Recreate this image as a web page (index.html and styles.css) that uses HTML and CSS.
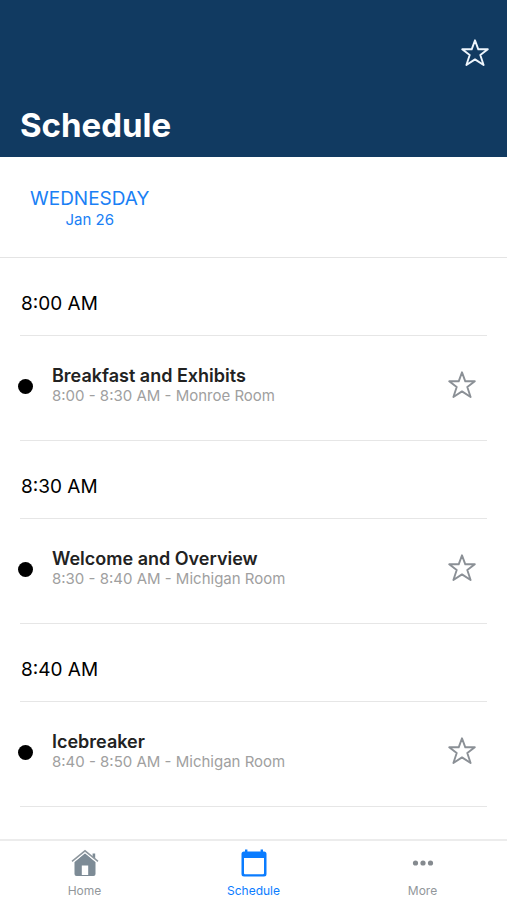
FILE: index.html
```html
<!DOCTYPE html>
<html lang="en">
<head>
<meta charset="utf-8">
<meta name="viewport" content="width=device-width, initial-scale=1">
<title>Schedule</title>
<link rel="stylesheet" href="styles.css">
</head>
<body>
<svg class="defs" aria-hidden="true">
  <symbol id="star" viewBox="0 0 28 28">
    <path d="M14 1.300 17.300 10.300H26.800L19.300 16 22.600 26 14 20.400 5.400 26 8.700 16 1.200 10.300H10.700Z" fill="none" stroke="currentColor" stroke-width="1.900" stroke-linejoin="round"/>
  </symbol>
</svg>

<header class="header">
  <button class="star star-light" type="button" aria-label="Favorites"><svg><use href="#star"/></svg></button>
  <h1>Schedule</h1>
</header>

<div class="days">
  <button class="day" type="button"><span class="day-name">WEDNESDAY</span><span class="day-date">Jan 26</span></button>
</div>

<main class="list">
  <section>
    <h2>8:00 AM</h2>
    <article class="item">
      <span class="dot"></span>
      <div class="text"><h3>Breakfast and Exhibits</h3><p>8:00 - 8:30 AM - Monroe Room</p></div>
      <button class="star" type="button" aria-label="Add Breakfast and Exhibits to favorites"><svg><use href="#star"/></svg></button>
    </article>
  </section>
  <section>
    <h2>8:30 AM</h2>
    <article class="item">
      <span class="dot"></span>
      <div class="text"><h3>Welcome and Overview</h3><p>8:30 - 8:40 AM - Michigan Room</p></div>
      <button class="star" type="button" aria-label="Add Welcome and Overview to favorites"><svg><use href="#star"/></svg></button>
    </article>
  </section>
  <section>
    <h2>8:40 AM</h2>
    <article class="item">
      <span class="dot"></span>
      <div class="text"><h3>Icebreaker</h3><p>8:40 - 8:50 AM - Michigan Room</p></div>
      <button class="star" type="button" aria-label="Add Icebreaker to favorites"><svg><use href="#star"/></svg></button>
    </article>
  </section>
</main>

<nav class="tabs">
  <a href="#home">
    <svg viewBox="0 0 28 28">
      <path fill-rule="evenodd" d="M3.500 13 14 4.300 24.500 13V25Q24.500 27 22.500 27H5.500Q3.500 27 3.500 25ZM10.800 16.500V26H17.200V16.500Z" fill="#7d8b96"/>
      <path d="M1 12.800 14 2 27 12.800" fill="none" stroke="#fff" stroke-width="3"/>
      <path d="M21.600 4.500H24.200V10L21.600 7.900Z" fill="#7d8b96"/>
      <path d="M1 12.400 14 1.800 27 12.400" fill="none" stroke="#8e979e" stroke-width="1.500"/>
    </svg>
    <span>Home</span>
  </a>
  <a href="#schedule" class="active" aria-current="page">
    <svg viewBox="0 0 28 28">
      <path fill="currentColor" fill-rule="evenodd" d="M5 .500H7.400V2.500H20.600V.500H23V2.500H24Q26.500 2.500 26.500 5V25Q26.500 27.500 24 27.500H4Q1.500 27.500 1.500 25V5Q1.500 2.500 4 2.500H5ZM4 9V24.200Q4 25.200 5 25.200H23Q24 25.200 24 24.200V9Z"/>
    </svg>
    <span>Schedule</span>
  </a>
  <a href="#more">
    <svg viewBox="0 0 28 28"><g fill="#858a8f"><circle cx="6.500" cy="14" r="2.600"/><circle cx="14" cy="14" r="2.600"/><circle cx="21.500" cy="14" r="2.600"/></g></svg>
    <span>More</span>
  </a>
</nav>
</body>
</html>
```
FILE: styles.css
```css
* { box-sizing: border-box; }

body {
  margin: 0;
  min-height: 100vh;
  display: flex;
  flex-direction: column;
  background: #fff;
  color: #000;
  font-family: Inter, "Liberation Sans", sans-serif;
}

h1, h2, h3, p { margin: 0; }

button {
  padding: 0;
  border: 0;
  background: none;
  font: inherit;
}

.defs { position: absolute; width: 0; height: 0; }

.header {
  display: flex;
  flex-direction: column;
  padding: 39px 18px 12px 20px;
  background: #113a61;
  color: #fff;
}

.header h1 {
  margin-top: 38px;
  font-size: 33px;
  line-height: 40px;
  font-weight: 700;
}

.star { color: #8b9096; width: 28px; height: 28px; flex: none; }
.star svg { display: block; width: 28px; height: 28px; }
.star-light { align-self: flex-end; color: #eef5fc; }

.days {
  display: flex;
  padding: 30px 30px 28px;
  border-bottom: 1px solid #e4e4e4;
}

.day {
  display: flex;
  flex-direction: column;
  align-items: center;
  color: #1a80f5;
}

.day-name { font-size: 19px; line-height: 24px; }
.day-date { font-size: 15px; line-height: 18px; }

.list { flex: 1; padding: 0 20px; }

.list h2 {
  height: 78px;
  padding: 34px 0 0 1px;
  border-bottom: 1px solid #e6e6e6;
  font-size: 19px;
  line-height: 24px;
  font-weight: 400;
}

.item {
  display: flex;
  align-items: center;
  height: 105px;
  padding: 0 11px 6px 0;
  border-bottom: 1px solid #e6e6e6;
}

.dot {
  width: 15px;
  height: 15px;
  margin: 2px 0 0 -2px;
  border-radius: 50%;
  background: #000;
}

.text { flex: 1; padding-left: 19px; }

.text h3 {
  color: #222;
  font-size: 18px;
  line-height: 22px;
  font-weight: 600;
}

.text p {
  color: #a0a0a0;
  font-size: 15px;
  line-height: 18px;
}

.tabs {
  display: flex;
  height: 61px;
  border-top: 2px solid #ececec;
}

.tabs a {
  flex: 1;
  display: flex;
  flex-direction: column;
  align-items: center;
  padding-top: 8px;
  color: #92979b;
  font-size: 12px;
  line-height: 16px;
  text-decoration: none;
}

.tabs svg { width: 28px; height: 28px; margin-bottom: 6px; }
.tabs .active { color: #0a7cff; }
```
